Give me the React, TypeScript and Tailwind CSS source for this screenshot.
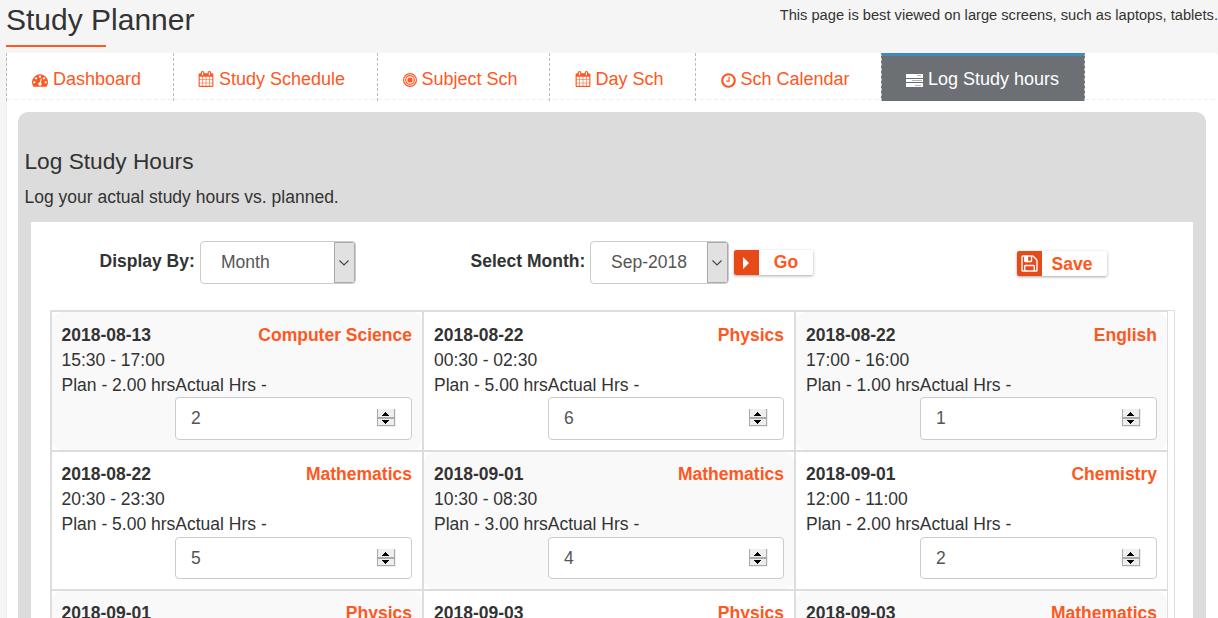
import React from "react";

const ICONS = {
  dashboard: "M384 1152q0-53-37.5-90.5t-90.5-37.5-90.5 37.5-37.5 90.5 37.5 90.5 90.5 37.5 90.5-37.5 37.5-90.5zm192-448q0-53-37.5-90.5t-90.5-37.5-90.5 37.5-37.5 90.5 37.5 90.5 90.5 37.5 90.5-37.5 37.5-90.5zm428 481l101-382q6-26-7.5-48.5t-38.5-29.5-48 6.5-30 39.5l-101 382q-60 5-107 43.5t-63 98.5q-20 77 20 146t117 89 146-20 89-117q16-60-6-117t-72-91zm660-33q0-53-37.5-90.5t-90.5-37.5-90.5 37.5-37.5 90.5 37.5 90.5 90.5 37.5 90.5-37.5 37.5-90.5zm-640-640q0-53-37.5-90.5t-90.5-37.5-90.5 37.5-37.5 90.5 37.5 90.5 90.5 37.5 90.5-37.5 37.5-90.5zm448 192q0-53-37.5-90.5t-90.5-37.5-90.5 37.5-37.5 90.5 37.5 90.5 90.5 37.5 90.5-37.5 37.5-90.5zm320 448q0 261-141 483-19 29-54 29h-1402q-35 0-54-29-141-221-141-483 0-182 71-348t191-286 286-191 348-71 348 71 286 191 191 286 71 348z",
  calendar: "M192 1664h288v-288h-288v288zm352 0h320v-288h-320v288zm-352-352h288v-320h-288v320zm352 0h320v-320h-320v320zm-352-384h288v-288h-288v288zm736 736h320v-288h-320v288zm-384-736h320v-288h-320v288zm768 736h288v-288h-288v288zm-384-352h320v-320h-320v320zm-352-864v-288q0-13-9.5-22.5t-22.5-9.5h-64q-13 0-22.5 9.5t-9.5 22.5v288q0 13 9.5 22.5t22.5 9.5h64q13 0 22.5-9.5t9.5-22.5zm736 864h288v-320h-288v320zm-384-384h320v-288h-320v288zm384 0h288v-288h-288v288zm32-480v-288q0-13-9.5-22.5t-22.5-9.5h-64q-13 0-22.5 9.5t-9.5 22.5v288q0 13 9.5 22.5t22.5 9.5h64q13 0 22.5-9.5t9.5-22.5zm384-64v1280q0 52-38 90t-90 38h-1408q-52 0-90-38t-38-90v-1280q0-52 38-90t90-38h128v-96q0-66 47-113t113-47h64q66 0 113 47t47 113v96h384v-96q0-66 47-113t113-47h64q66 0 113 47t47 113v96h128q52 0 90 38t38 90z",
  clock: "M1024 544v448q0 14-9 23t-23 9h-320q-14 0-23-9t-9-23v-64q0-14 9-23t23-9h224v-352q0-14 9-23t23-9h64q14 0 23 9t9 23zm416 352q0-148-73-273t-198-198-273-73-273 73-198 198-73 273 73 273 198 198 273 73 273-73 198-198 73-273zm224 0q0 209-103 385.5t-279.5 279.5-385.5 103-385.5-103-279.5-279.5-103-385.5 103-385.5 279.5-279.5 385.5-103 385.5 103 279.5 279.5 103 385.5z",
  floppy: "M512 1536h768v-384h-768v384zm896 0h128v-896q0-14-10-38.5t-20-34.5l-281-281q-10-10-34-20t-39-10v416q0 40-28 68t-68 28h-576q-40 0-68-28t-28-68v-416h-128v1280h128v-416q0-40 28-68t68-28h832q40 0 68 28t28 68v416zm-384-928v-320q0-13-9.5-22.5t-22.5-9.5h-192q-13 0-22.5 9.5t-9.5 22.5v320q0 13 9.5 22.5t22.5 9.5h192q13 0 22.5-9.5t9.5-22.5zm640 32v928q0 40-28 68t-68 28h-1344q-40 0-68-28t-28-68v-1344q0-40 28-68t68-28h928q40 0 88 20t76 48l280 280q28 28 48 76t20 88z",
};

function Glyph({ d, className }: { d: string; className: string }) {
  return (
    <svg viewBox="0 0 1792 1792" fill="currentColor" className={`shrink-0 ${className}`}>
      <path d={d} />
    </svg>
  );
}

function Bullseye() {
  return (
    <svg viewBox="0 0 14 14" fill="none" stroke="currentColor" className="h-[14px] w-[14px] shrink-0 translate-y-[1px]">
      <circle cx="7" cy="7" r="6.4" strokeWidth="1.2" />
      <circle cx="7" cy="7" r="4.3" strokeWidth="1.2" />
      <circle cx="7" cy="7" r="2.6" fill="currentColor" stroke="none" />
    </svg>
  );
}

function Bars() {
  return (
    <svg viewBox="0 0 17 13" className="h-[13px] w-[17px] shrink-0 translate-y-[1px]" shapeRendering="crispEdges">
      <path d="M0 0h17v4H0zM0 5h17v3H0zM0 9h17v4H0z" fill="#fff" />
      <path d="M11 1h4v1h-4zM6 6h10v1H6zM9 11h6v1H9z" fill="#b4b7b9" />
    </svg>
  );
}

const tabs = [
  { label: "Dashboard", box: "w-[167px] pl-[25px] gap-[5px]", icon: <Glyph d={ICONS.dashboard} className="h-4 w-4 translate-y-[1px]" /> },
  { label: "Study Schedule", box: "w-[204px] pl-[24px] gap-[5px]", icon: <Glyph d={ICONS.calendar} className="h-4 w-4" /> },
  { label: "Subject Sch", box: "w-[172px] pl-[24.5px] gap-[5px]", icon: <Bullseye /> },
  { label: "Day Sch", box: "w-[146px] pl-[24.5px] gap-[5px]", icon: <Glyph d={ICONS.calendar} className="h-4 w-4" /> },
  { label: "Sch Calendar", box: "w-[185px] pl-[23.5px] gap-[4px]", icon: <Glyph d={ICONS.clock} className="h-[17px] w-[17px] translate-y-[1px]" /> },
];

function Select({ value, width }: { value: string; width: string }) {
  return (
    <div className={`flex h-[43px] overflow-hidden rounded-[4px] border border-[#ccc] bg-white text-[#555] ${width}`}>
      <span className="flex-1 pt-[8px] pl-[20px]">{value}</span>
      <span className="flex w-[21px] items-center justify-center border border-[#aaa] bg-[#e1e1e1] pr-[1px]">
        <svg viewBox="0 0 10 6" className="h-[6px] w-[10px]" fill="none" stroke="#444" strokeWidth="1.1">
          <path d="M.5.5 5 5 9.500.5" />
        </svg>
      </span>
    </div>
  );
}

function Spinner() {
  return (
    <svg viewBox="0 0 19 18" className="mt-[11px] h-[18px] w-[19px]" shapeRendering="crispEdges">
      <path d="M0 0h19v18H0z" fill="#eee" />
      <path d="M0 0h1v17H0zM17 0h1v17h-1zM0 8h18v2H0zM0 16h18v1H0z" fill="#aaa" />
      <path d="M8 3h1v1h1v1h1v1h1v1H5V6h1V5h1V4h1zM5 11h7v1h-1v1h-1v1h-1v1H8v-1H7v-1H6v-1H5z" fill="#000" />
    </svg>
  );
}

const entries = [
  ["2018-08-13", "Computer Science", "15:30 - 17:00", "2.00", "2"],
  ["2018-08-22", "Physics", "00:30 - 02:30", "5.00", "6"],
  ["2018-08-22", "English", "17:00 - 16:00", "1.00", "1"],
  ["2018-08-22", "Mathematics", "20:30 - 23:30", "5.00", "5"],
  ["2018-09-01", "Mathematics", "10:30 - 08:30", "3.00", "4"],
  ["2018-09-01", "Chemistry", "12:00 - 11:00", "2.00", "2"],
  ["2018-09-01", "Physics", "", "", ""],
  ["2018-09-03", "Physics", "", "", ""],
  ["2018-09-03", "Mathematics", "", "", ""],
];

function Entry({ data, index }: { data: string[]; index: number }) {
  const [date, subject, time, plan, actual] = data;
  const row = Math.floor(index / 3);
  const col = index % 3;
  return (
    <div className={`border-t-2 border-[#ddd] ${col === 0 ? "border-l-2" : ""} ${col === 2 ? "border-r" : "border-r-2"}`}>
      <div className={`h-full rounded-[10px] pr-[10px] ${col === 0 ? "pl-[9.5px]" : "pl-[10px]"} ${row === 0 ? "pt-[11px]" : "pt-[10px]"} ${index % 2 === 0 ? "bg-[#f9f9f9]" : "bg-white"}`}>
        <div className="flex justify-between font-bold">
          <span>{date}</span>
          <span className="text-[#ff5722]">{subject}</span>
        </div>
        {time && (
          <>
            <div>{time}</div>
            <div className="whitespace-nowrap">Plan - {plan} hrsActual Hrs -</div>
            <div className={`ml-auto flex items-start justify-between rounded-[4px] border border-[#ccc] bg-white px-[15px] text-[#555] ${col === 1 ? "w-[236px]" : "w-[237px]"} ${row === 0 ? "-mt-[1px] h-[43px]" : "h-[42px]"}`}>
              <span className="pt-[8px]">{actual}</span>
              <Spinner />
            </div>
          </>
        )}
      </div>
    </div>
  );
}

export default function App() {
  return (
    <div className="h-[618px] w-[1218px] overflow-hidden bg-[#f5f5f5] pl-[6px] font-['Liberation_Sans',Arial,sans-serif] text-[17.5px] leading-[25px] text-[#333]">
      <header className="flex h-[53px] justify-between">
        <div>
          <h1 className="h-[45px] pt-[3px] text-[30px] leading-[34px] whitespace-nowrap">Study Planner</h1>
          <div className="h-[2px] w-[100px] bg-[#ff5722]" />
        </div>
        <p className="pt-[5px] text-[14.66px] leading-[20px] whitespace-nowrap">This page is best viewed on large screens, such as laptops, tablets.</p>
      </header>

      <main className="h-[565px] rounded-tr-[3px] border-l border-[#eee] bg-white">
        <nav className="-ml-px flex h-[48px] border-l border-dashed border-[#bbb] bg-[linear-gradient(90deg,#eee_60%,transparent_60%)] bg-[length:7px_1px] bg-[position:0_46px] bg-repeat-x text-[18px] whitespace-nowrap">
          {tabs.map((tab, i) => (
            <a key={tab.label} className={`flex items-center pt-[4px] text-[#ff5722] ${tab.box} ${i < 4 ? "border-r border-dashed border-[#bbb]" : ""}`}>
              {tab.icon}
              <span>{tab.label}</span>
            </a>
          ))}
          <a className="flex w-[204px] items-center gap-[5px] border-x border-t-[3px] border-x-[#bbb] border-t-[#3c8dbc] bg-[#6c7074] pt-[1px] pl-[24px] text-white [border-left-style:dashed] [border-right-style:dashed]">
            <Bars />
            <span>Log Study hours</span>
          </a>
        </nav>

        <section className="mt-[11px] mr-[12px] ml-[11px] h-[506px] rounded-t-[10px] bg-[#dcdcdc] pt-[35px] pr-[13px] pl-[13px]">
          <h2 className="-ml-[6.5px] text-[22.7px] leading-[28px]">Log Study Hours</h2>
          <p className="mt-[10px] -ml-[6.5px]">Log your actual study hours vs. planned.</p>

          <div className="mt-[12px] h-[396px] bg-white pl-[19px]">
            <div className="flex h-[88px] items-start pt-[19px]">
              <label className="ml-[49.5px] w-[100.5px] pt-[8px] font-bold whitespace-nowrap">Display By:</label>
              <Select value="Month" width="w-[156px]" />
              <label className="ml-[114.5px] w-[119.5px] pt-[8px] font-bold whitespace-nowrap">Select Month:</label>
              <Select value="Sep-2018" width="w-[139px]" />
              <button className="mt-[9px] ml-[5px] flex h-[25px] w-[79px] rounded-[2px] bg-white font-bold text-[#ff5722] shadow-[0_1px_3px_rgba(0,0,0,0.35)]">
                <span className="flex h-full w-[25px] items-center justify-center rounded-l-[2px] bg-[#e64a19] pr-[2px]">
                  <svg viewBox="0 0 6 12" className="h-[12px] w-[6px] fill-white"><path d="M0 0 6 6 0 12z" /></svg>
                </span>
                <span className="flex-1">Go</span>
              </button>
              <button className="mt-[10px] ml-[204px] flex h-[25px] w-[90px] rounded-[2px] bg-white font-bold text-[#ff5722] shadow-[0_1px_3px_rgba(0,0,0,0.35)]">
                <span className="flex h-full w-[25px] items-center justify-center rounded-l-[2px] bg-[#e64a19] text-white">
                  <Glyph d={ICONS.floppy} className="h-[19px] w-[19px]" />
                </span>
                <span className="flex-1 pt-[1px] pr-[5px]">Save</span>
              </button>
            </div>

            <div className="h-[308px] w-[1125px] overflow-hidden border-t border-r border-[#ddd]">
              <div className="-mt-px grid w-[1118px] grid-cols-[374px_372px_372px] grid-rows-[140px_139px_140px]">
                {entries.map((entry, i) => <Entry key={i} data={entry} index={i} />)}
              </div>
            </div>
          </div>
        </section>
      </main>
    </div>
  );
}
